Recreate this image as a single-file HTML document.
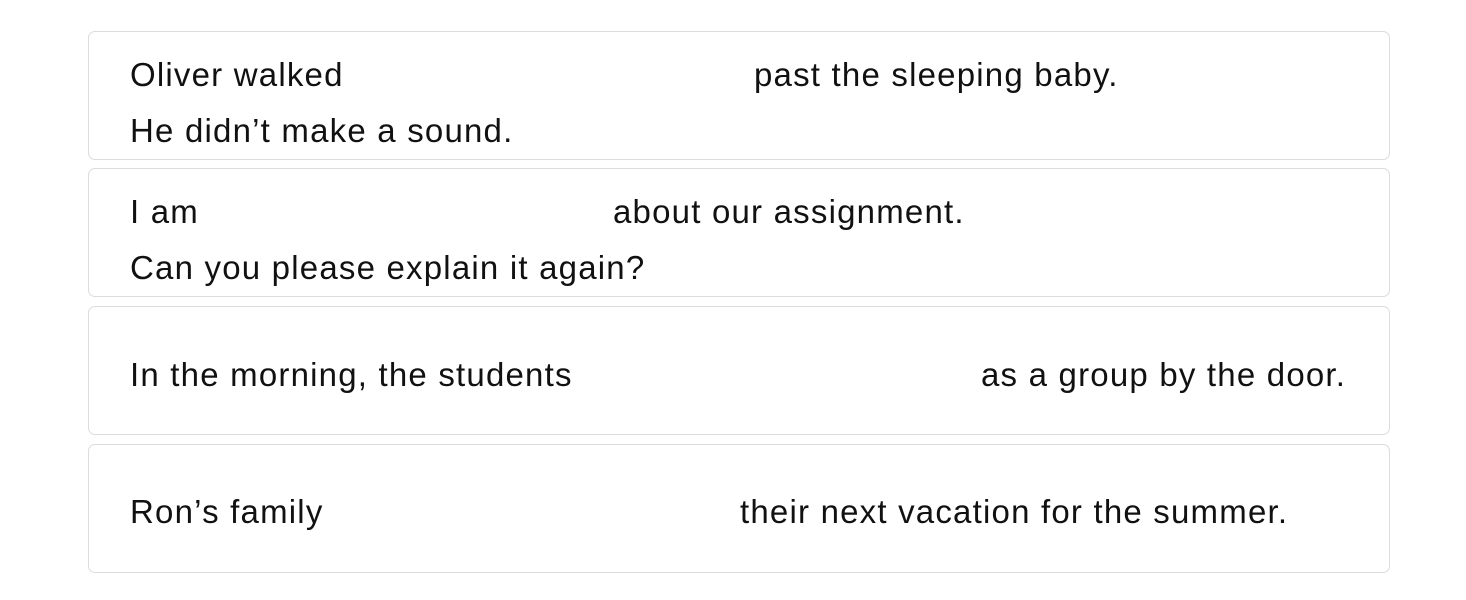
<html><head><style>
body{margin:0;background:#fff;width:1466px;height:600px;position:relative;font-family:"Liberation Sans",sans-serif;font-size:33px;color:#111}
.c{position:absolute;left:88px;width:1300px;height:127px;border:1px solid #dcdcdc;border-radius:7px;box-sizing:content-box}
.t{position:absolute;white-space:nowrap;line-height:1;letter-spacing:1.2px}
</style></head><body>
<div class="c" style="top:31px"></div>
<div class="c" style="top:168px"></div>
<div class="c" style="top:306px"></div>
<div class="c" style="top:444px"></div>
<div class="t" style="left:130px;top:58px">Oliver walked</div>
<div class="t" style="left:754px;top:58px">past the sleeping baby.</div>
<div class="t" style="left:130px;top:114px">He didn’t make a sound.</div>
<div class="t" style="left:130px;top:195px">I am</div>
<div class="t" style="left:613px;top:195px">about our assignment.</div>
<div class="t" style="left:130px;top:251px">Can you please explain it again?</div>
<div class="t" style="left:130px;top:358px">In the morning, the students</div>
<div class="t" style="left:981px;top:358px">as a group by the door.</div>
<div class="t" style="left:130px;top:495px">Ron’s family</div>
<div class="t" style="left:740px;top:495px">their next vacation for the summer.</div>
</body></html>
